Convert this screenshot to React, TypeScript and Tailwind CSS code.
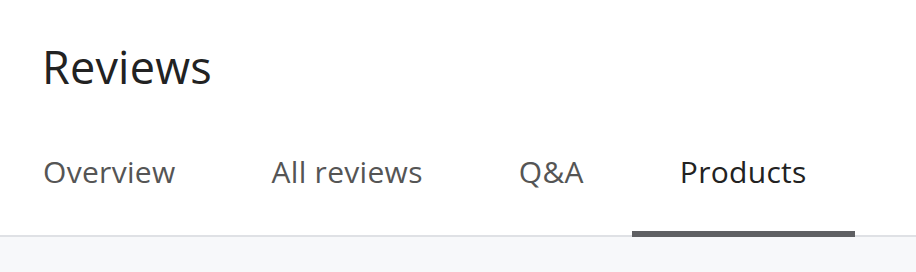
import React, { useState } from "react";

const tabs: string[] = ["Overview", "All reviews", "Q&A", "Products"];

const App: React.FC = () => {
  const [active, setActive] = useState<string>("Products");

  return (
    <div className="w-[916px] h-[272px] bg-[#f7f8fa] font-['Open_Sans',sans-serif]">
      <div className="bg-white border-b-2 border-[#dfe1e5]">
        <div className="pl-[42px] pt-[39px]">
          <h1 className="text-[45px] leading-[56px] text-[#222222] font-normal tracking-[0.2px]">
            Reviews
          </h1>
        </div>
        <div className="flex ml-[-5px] mt-[59px]">
          {tabs.map((tab: string) => (
            <button
              key={tab}
              onClick={() => setActive(tab)}
              className={`px-12 pb-[41px] text-[30px] leading-[36px] tracking-[0.3px] border-b-[6px] -mb-[2px] ${
                active === tab
                  ? "text-[#222222] border-[#5f6063]"
                  : "text-[#555555] border-transparent"
              }`}
            >
              {tab}
            </button>
          ))}
        </div>
      </div>
    </div>
  );
};

export default App;
